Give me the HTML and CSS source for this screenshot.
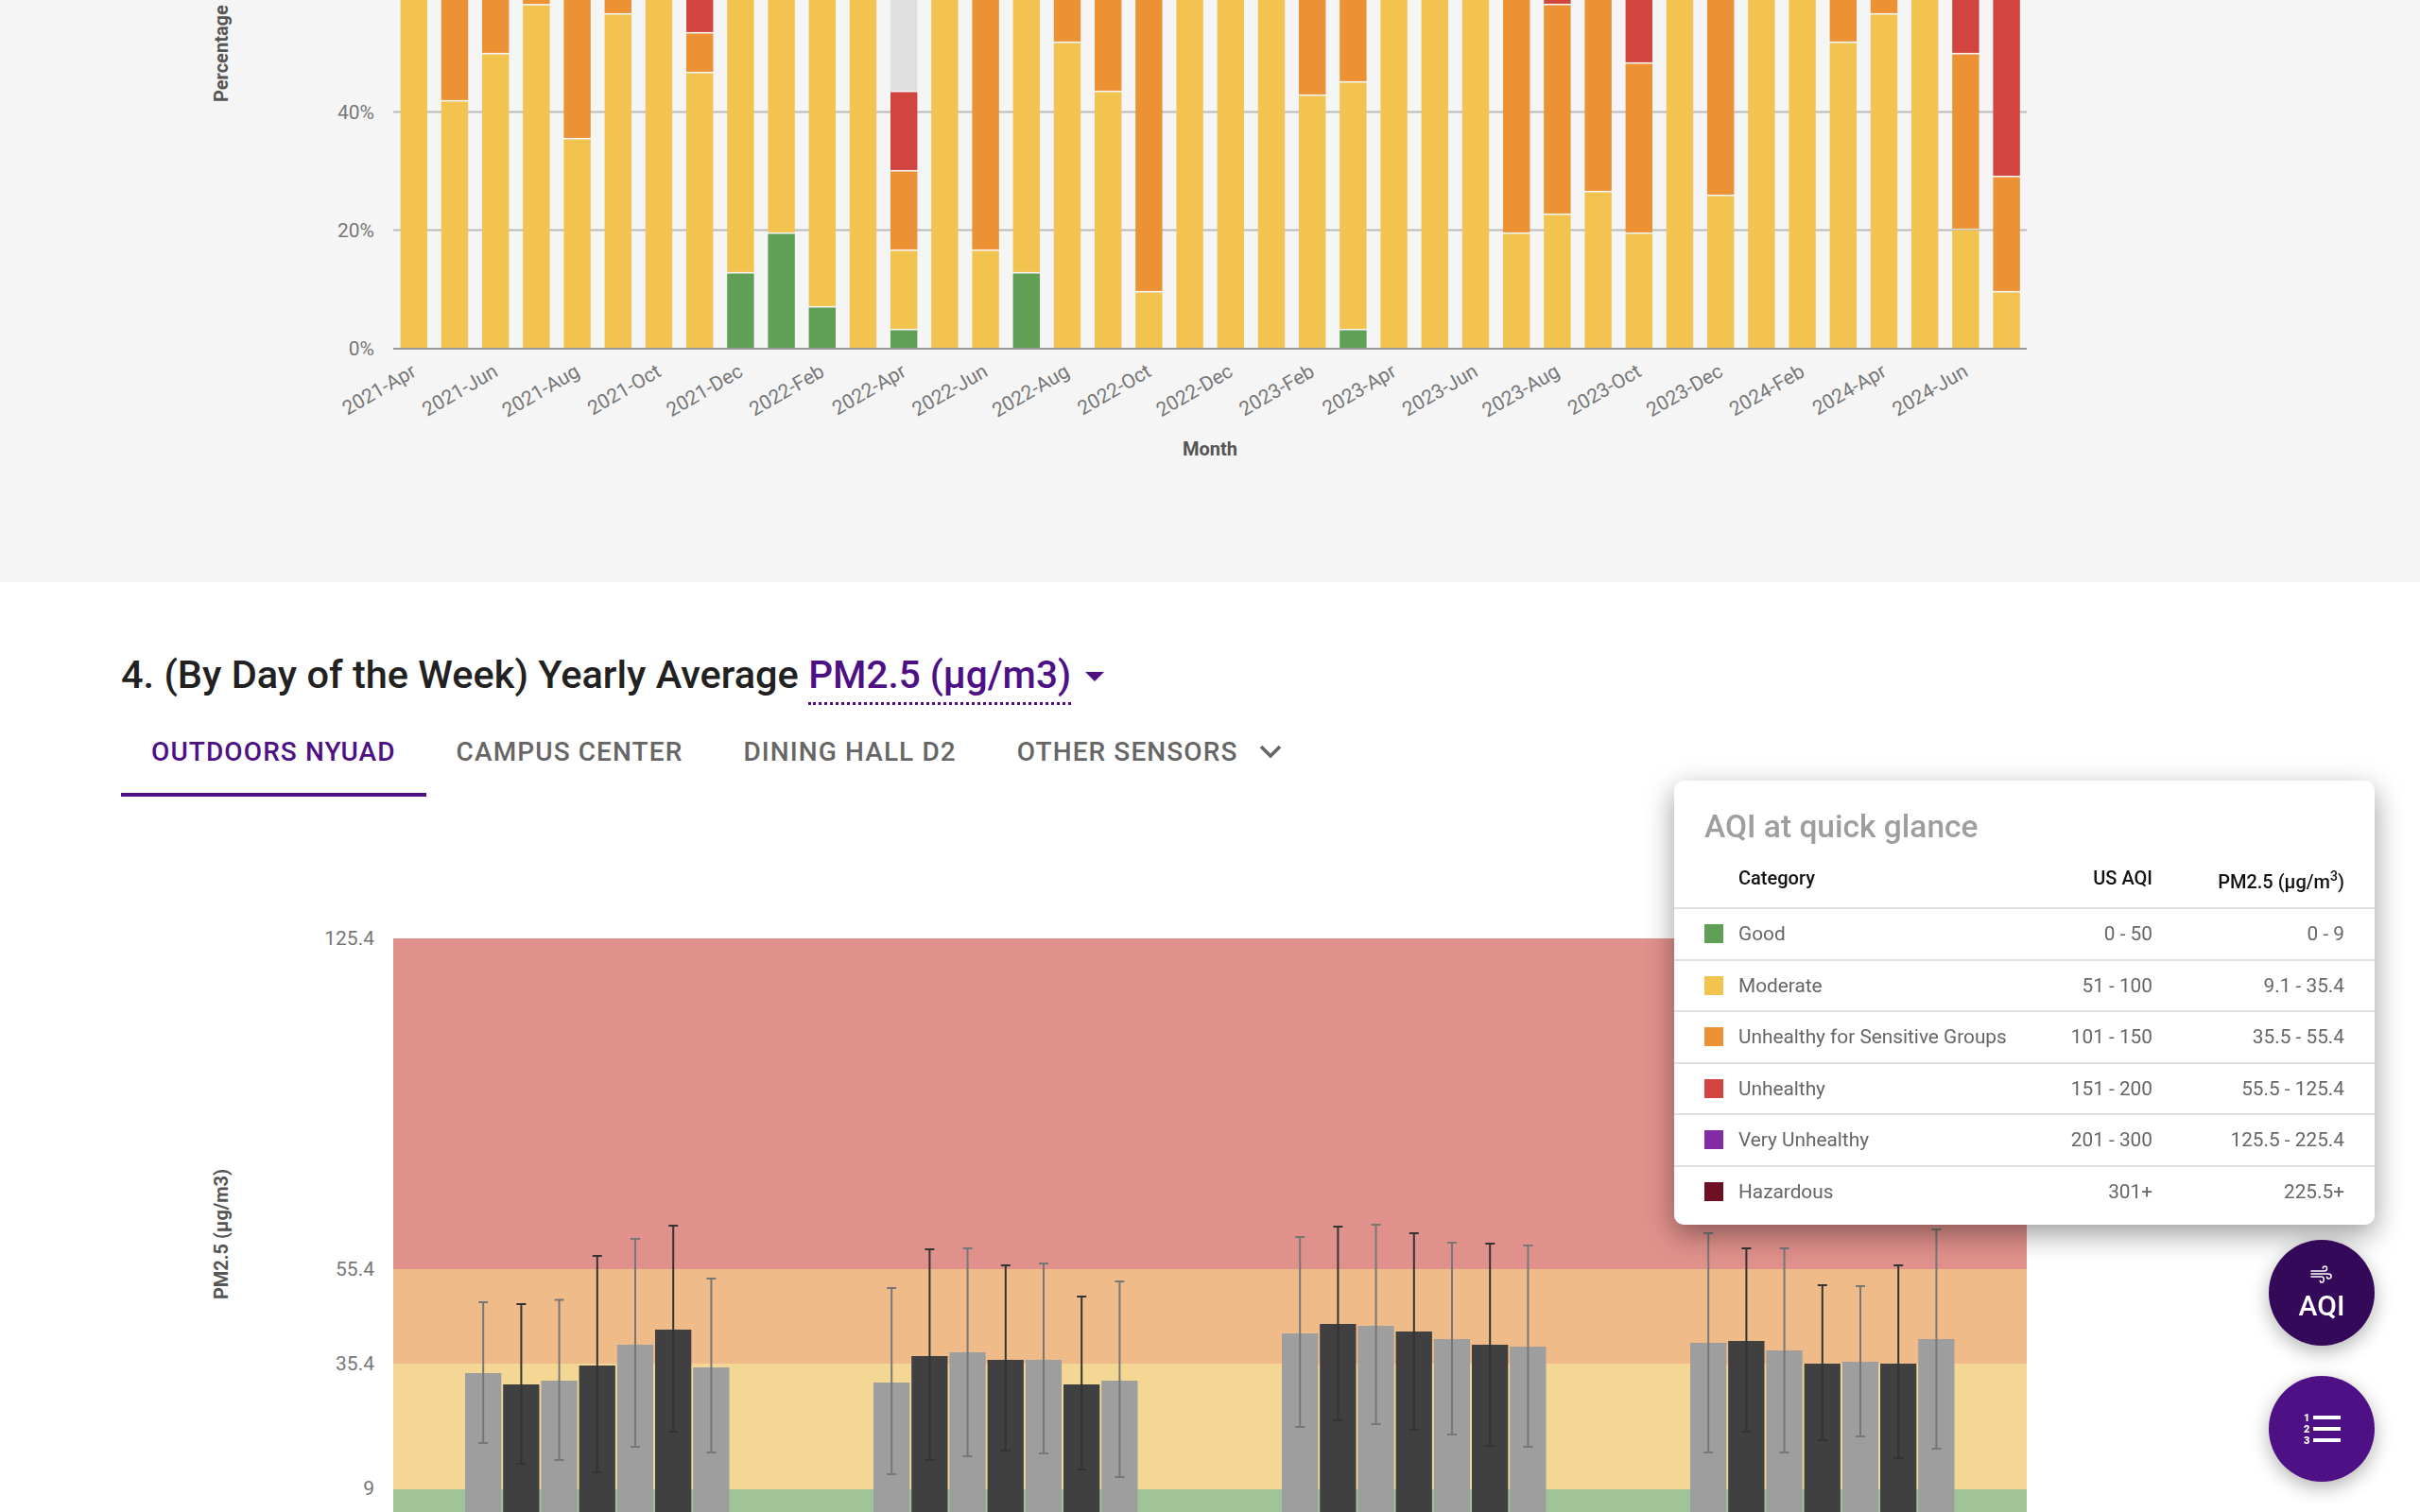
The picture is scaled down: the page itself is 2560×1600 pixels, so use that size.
FILE: index.html
```html
<!DOCTYPE html>
<html lang="en">
<head>
  <meta charset="UTF-8">
  <meta name="viewport" content="width=device-width, initial-scale=1.0">
  <title>Air Quality Dashboard</title>
  <link rel="stylesheet" href="styles.css">
</head>
<body>
  <section class="panel-grey">
    <svg id="monthlyChart" class="chart" width="2304" height="616" viewBox="128 0 2304 616"></svg>
  </section>

  <section class="panel-white">
    <h2 class="section-title">4. (By Day of the Week) Yearly Average
      <span class="metric-select"><span class="metric-name">PM2.5 (µg/m3)</span><span class="caret"></span></span>
    </h2>
    <nav class="tabs">
      <a class="tab tab-active">OUTDOORS NYUAD</a>
      <a class="tab">CAMPUS CENTER</a>
      <a class="tab">DINING HALL D2</a>
      <a class="tab">OTHER SENSORS
        <svg class="chevron" width="24" height="14" viewBox="0 0 24 14"><path d="M2 2l10 10L22 2" fill="none" stroke="#666" stroke-width="3.6"/></svg>
      </a>
    </nav>
    <svg id="weekChart" class="chart week-chart" width="2304" height="716" viewBox="128 884 2304 716"></svg>
  </section>

  <aside class="aqi-card">
    <h3 class="aqi-title">AQI at quick glance</h3>
    <table class="aqi-table">
      <thead>
        <tr><th class="swatch-cell"></th><th class="col-name">Category</th><th class="col-num">US AQI</th><th class="col-pm">PM2.5 (µg/m<sup>3</sup>)</th></tr>
      </thead>
      <tbody>
        <tr><td class="swatch-cell"><span class="swatch good"></span></td><td>Good</td><td class="col-num">0 - 50</td><td class="col-pm">0 - 9</td></tr>
        <tr><td class="swatch-cell"><span class="swatch moderate"></span></td><td>Moderate</td><td class="col-num">51 - 100</td><td class="col-pm">9.1 - 35.4</td></tr>
        <tr><td class="swatch-cell"><span class="swatch sensitive"></span></td><td>Unhealthy for Sensitive Groups</td><td class="col-num">101 - 150</td><td class="col-pm">35.5 - 55.4</td></tr>
        <tr><td class="swatch-cell"><span class="swatch unhealthy"></span></td><td>Unhealthy</td><td class="col-num">151 - 200</td><td class="col-pm">55.5 - 125.4</td></tr>
        <tr><td class="swatch-cell"><span class="swatch very"></span></td><td>Very Unhealthy</td><td class="col-num">201 - 300</td><td class="col-pm">125.5 - 225.4</td></tr>
        <tr><td class="swatch-cell"><span class="swatch hazardous"></span></td><td>Hazardous</td><td class="col-num">301+</td><td class="col-pm">225.5+</td></tr>
      </tbody>
    </table>
  </aside>

  <div class="fab-stack">
    <button class="fab fab-aqi">
      <svg width="24" height="20" viewBox="0 0 24 20" fill="none" stroke="#fff" stroke-width="1.6" stroke-linecap="round">
        <path d="M1 6h14c3 0 3.500-5 .5-5-1.500 0-2.200 1-2.200 2"/>
        <path d="M1 9h18c4 0 4 5 .5 5-1.300 0-2-.8-2-1.800"/>
        <path d="M1 12h11c3 0 3 6 .2 6-1.200 0-1.800-.7-1.800-1.600"/>
      </svg>
      <span>AQI</span>
    </button>
    <button class="fab fab-list">
      <svg width="40" height="40" viewBox="0 0 40 40">
        <text x="1" y="12" class="fab-num">1</text>
        <text x="1" y="24" class="fab-num">2</text>
        <text x="1" y="36" class="fab-num">3</text>
        <path d="M11 6h29v4H11zM11 18h29v4H11zM11 30h29v4H11z" fill="#fff"/>
      </svg>
    </button>
  </div>

  <script src="chart.js"></script>
</body>
</html>
```

FILE: styles.css
```css
* { box-sizing: border-box; }
html, body { margin: 0; padding: 0; height: 1600px; overflow: hidden; background: #fff; }
body { font-family: Roboto, "Noto Sans", sans-serif; color: #212121; }

.panel-grey { height: 616px; background: #f5f5f5; padding-left: 128px; }
.panel-white { height: 984px; padding: 68px 128px 0; }
.chart { display: block; }
.chart text { font-family: Roboto, "Noto Sans", sans-serif; }
.week-chart { margin-top: 41px; }
.tick { font-size: 21px; fill: #777; }
.axis-title { font-size: 20px; font-weight: 700; fill: #555; }

.section-title { margin: 0; height: 60px; font-size: 41.500px; line-height: 60px; font-weight: 500; color: #212121; }
.metric-select { color: #4d1085; display: inline-flex; align-items: center; }
.metric-name { font-size: 40.500px; border-bottom: 3px dotted #4d1085; padding-bottom: 0; line-height: 58px; }
.caret { width: 0; height: 0; margin-left: 15px; border: 10px solid transparent; border-top: 10px solid #4d1085; border-bottom: 0; }

.tabs { display: flex; height: 88px; margin-top: 11px; }
.tab { display: flex; align-items: center; gap: 22px; padding: 0 32px 8px; height: 88px; font-size: 28px; letter-spacing: 1.100px; font-weight: 500; color: #666; }
.tab-active { color: #4d1085; border-bottom: 4px solid #4d1085; padding-bottom: 4px; }

.aqi-card { position: fixed; left: 1771px; top: 826px; width: 741px; height: 470px; background: #fff; border-radius: 10px; box-shadow: 0 10px 30px rgba(0,0,0,.4); padding-top: 27px; }
.aqi-title { margin: 0 32px; font-size: 33.500px; line-height: 44px; font-weight: 500; color: #9e9e9e; }
.aqi-table { width: 741px; table-layout: fixed; border-collapse: collapse; margin-top: 8px; font-size: 20.800px; color: #666; }
.aqi-table th { height: 56px; font-size: 20px; font-weight: 500; color: #111; text-align: left; border-bottom: 2px solid #e0e0e0; padding: 0 0 8px; }
.aqi-table td { height: 54.500px; padding: 0; border-bottom: 2px solid #e0e0e0; }
.aqi-table tr:last-child td { border-bottom: 0; }
.aqi-table .col-name { width: 318px; }
.aqi-table .col-num { width: 120px; text-align: right; white-space: nowrap; }
.aqi-table .col-pm { text-align: right; padding-right: 32px; white-space: nowrap; }
.aqi-table th.col-pm { padding-top: 6px; padding-bottom: 6px; }
.aqi-table sup { font-size: 14px; line-height: 0; }
.swatch-cell { width: 68px; padding-left: 32px !important; }
.swatch { display: block; width: 20px; height: 20px; }
.good { background: #5fa055; }
.moderate { background: #f2c34f; }
.sensitive { background: #ed9234; }
.unhealthy { background: #d2453e; }
.very { background: #812ca5; }
.hazardous { background: #6f0f22; }

.fab-stack { position: fixed; right: 48px; bottom: 32px; display: flex; flex-direction: column; gap: 32px; }
.fab { width: 112px; height: 112px; border: 0; border-radius: 50%; color: #fff; display: flex; flex-direction: column; align-items: center; justify-content: center; box-shadow: 0 6px 20px rgba(0,0,0,.3); font-family: inherit; padding: 0; }
.fab-aqi { background: #35095a; font-size: 30px; font-weight: 500; line-height: 34px; gap: 6px; padding-top: 2px; }
.fab-list { background: #4d1085; }
.fab-num { font-size: 11px; font-weight: 900; fill: #fff; }
```

FILE: chart.js
```js
const NS = "http://www.w3.org/2000/svg";
const COLORS = { g: "#5fa055", y: "#f2c34f", o: "#ed9234", r: "#d2453e", x: "#e0e0e0" };

function el(parent, name, attrs, text) {
  const node = document.createElementNS(NS, name);
  for (const key in attrs) node.setAttribute(key, attrs[key]);
  if (text) node.textContent = text;
  parent.appendChild(node);
  return node;
}

// each bar: list of [colour, top y of the segment], bottom-up
const months = [
  [["y", -256]], [["y", 107.5], ["o", -256]], [["y", 57.5], ["o", -256]], [["y", 5.7], ["o", -256]],
  [["y", 147.5], ["o", -256]], [["y", 15.5], ["o", -256]], [["y", -256]],
  [["y", 77.5], ["o", 35.5], ["r", -256]], [["g", 289.5], ["y", -256]], [["g", 247.5], ["y", -256]],
  [["g", 325.5], ["y", -256]], [["y", -256]], [["g", 349.5], ["y", 265.5], ["o", 181.5], ["r", 97.5], ["x", -256]],
  [["y", -256]], [["y", 265.5], ["o", -256]], [["g", 289.5], ["y", -256]], [["y", 45.5], ["o", -256]],
  [["y", 97.5], ["o", -256]], [["y", 309.5], ["o", -256]], [["y", -256]], [["y", -256]], [["y", -256]],
  [["y", 101.5], ["o", -256]], [["g", 349.5], ["y", 87.5], ["o", -256]], [["y", -256]], [["y", -256]], [["y", -256]],
  [["y", 247.5], ["o", -256]], [["y", 227.5], ["o", 5.5], ["r", -256]], [["y", 203.5], ["o", -256]],
  [["y", 247.5], ["o", 67.5], ["r", -256]], [["y", -256]], [["y", 207.5], ["o", -256]], [["y", -256]], [["y", -256]],
  [["y", 45.5], ["o", -256]], [["y", 15.5], ["o", -256]], [["y", -256]], [["y", 243.5], ["o", 57.5], ["r", -256]],
  [["y", 309.5], ["o", 187.5], ["r", -256]]
];
const monthNames = ["Jan", "Feb", "Mar", "Apr", "May", "Jun", "Jul", "Aug", "Sep", "Oct", "Nov", "Dec"];

function drawMonthly() {
  const svg = document.getElementById("monthlyChart");
  [118.5, 243.5].forEach(y => el(svg, "rect", { x: 416, y: y - 1, width: 1728, height: 2, fill: "#bbb" }));
  months.forEach((segs, i) => {
    const x = 423.6 + 43.2 * i;
    let bottom = 368;
    segs.forEach(([c, top]) => {
      el(svg, "rect", { x, y: top, width: 28.4, height: bottom - top, fill: COLORS[c] });
      bottom = top - 1.6;
    });
    if (i % 2 === 0) {
      const m = (3 + i) % 12;
      const label = (2021 + Math.floor((3 + i) / 12)) + "-" + monthNames[m];
      const tx = x + 18;
      el(svg, "text", { class: "tick", x: tx, y: 397, "text-anchor": "end", transform: `rotate(-30 ${tx} 397)` }, label);
    }
  });
  el(svg, "rect", { x: 416, y: 368, width: 1728, height: 2, fill: "#999" });
  [["0%", 369], ["20%", 244], ["40%", 119]].forEach(([t, y]) => {
    el(svg, "text", { class: "tick", x: 396, y: y + 7, "text-anchor": "end" }, t);
  });
  el(svg, "text", { class: "axis-title", transform: "translate(241 108) rotate(-90)" }, "Percentage");
  el(svg, "text", { class: "axis-title", x: 1280, y: 482, "text-anchor": "middle" }, "Month");
}

// tops and whisker ends as page y, 7 bars per group
const groups = [
  { left: 492, tops: [1453, 1465, 1461, 1445, 1423, 1407, 1447], hi: [1378, 1380, 1375.5, 1329, 1311, 1297, 1353], lo: [1527, 1549, 1545, 1558, 1531, 1515, 1537] },
  { left: 924, tops: [1463, 1435, 1431, 1439, 1439, 1465, 1461], hi: [1363, 1322, 1321, 1339, 1337, 1372, 1356], lo: [1560, 1545, 1541, 1535, 1538, 1555, 1563] },
  { left: 1356, tops: [1411, 1401, 1403, 1409, 1417, 1423, 1425], hi: [1309, 1298, 1296, 1305, 1315, 1316, 1318], lo: [1510, 1503, 1507, 1513, 1518, 1530, 1531] },
  { left: 1788, tops: [1421, 1419, 1429, 1443, 1441, 1443, 1417], hi: [1305, 1321, 1321, 1360, 1361, 1339, 1301], lo: [1537, 1515, 1537, 1524, 1520, 1543, 1533] }
];

function drawWeek() {
  const svg = document.getElementById("weekChart");
  [[993, 1343, "#e1918c"], [1343, 1443, "#efbb88"], [1443, 1576, "#f4d795"], [1576, 1620, "#a0c497"]].forEach(([a, b, c]) => {
    el(svg, "rect", { x: 416, y: a, width: 1728, height: b - a, fill: c });
  });
  groups.forEach(g => {
    g.tops.forEach((top, i) => {
      const x = g.left + 40.2 * i;
      const dark = i % 2 === 1;
      el(svg, "rect", { x, y: top, width: 38.3, height: 1620 - top, fill: dark ? "#404040" : "#9e9e9e" });
      const cx = x + 19.2;
      const stroke = dark ? "#333" : "#777";
      el(svg, "line", { x1: cx, x2: cx, y1: g.hi[i], y2: g.lo[i], stroke, "stroke-width": 2 });
      el(svg, "line", { x1: cx - 5, x2: cx + 5, y1: g.hi[i], y2: g.hi[i], stroke, "stroke-width": 2 });
      el(svg, "line", { x1: cx - 5, x2: cx + 5, y1: g.lo[i], y2: g.lo[i], stroke, "stroke-width": 2 });
    });
  });
  [["125.4", 993], ["55.4", 1343], ["35.4", 1443], ["9", 1575]].forEach(([t, y]) => {
    el(svg, "text", { class: "tick", x: 396, y: y + 7, "text-anchor": "end" }, t);
  });
  el(svg, "text", { class: "axis-title", "text-anchor": "middle", transform: "translate(241 1306) rotate(-90)" }, "PM2.5 (µg/m3)");
}

drawMonthly();
drawWeek();
```
